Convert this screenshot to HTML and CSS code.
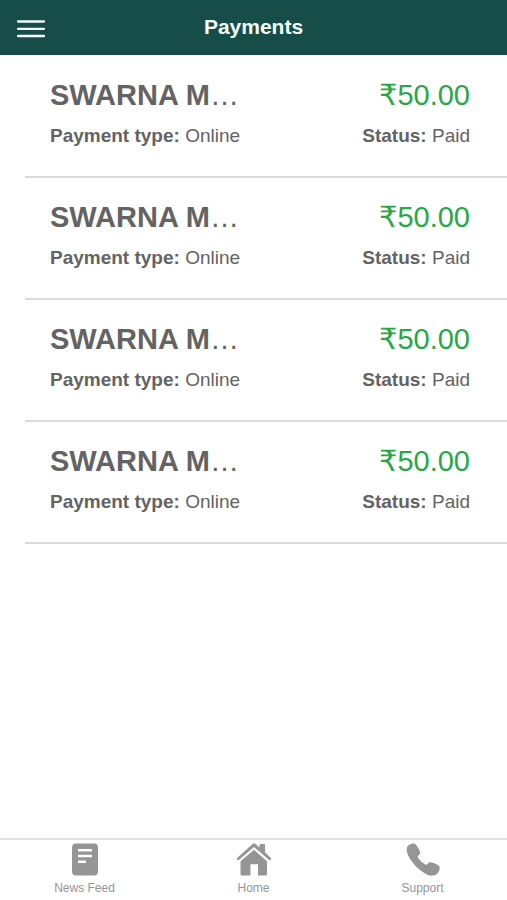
FILE: index.html
```html
<!DOCTYPE html>
<html lang="en">
<head>
<meta charset="utf-8">
<meta name="viewport" content="width=device-width, initial-scale=1">
<title>Payments</title>
<link rel="stylesheet" href="styles.css">
</head>
<body>
<header class="topbar">
  <button class="menu" type="button" aria-label="Menu">
    <svg width="30" height="20" viewBox="0 0 30 20" aria-hidden="true"><path d="M2 2.5H28M2 9.8H28M2 17H28" stroke="currentColor" stroke-width="2.3" stroke-linecap="round"/></svg>
  </button>
  <h1 class="title">Payments</h1>
</header>
<main class="content">
  <ul class="payments">
    <li class="payment">
      <div class="line main-line"><span class="name"><strong>SWARNA M</strong>…</span><span class="amount"><span class="currency">₹</span>50.00</span></div>
      <div class="line detail-line"><span><strong>Payment type:</strong> Online</span><span><strong>Status:</strong> Paid</span></div>
    </li>
    <li class="payment">
      <div class="line main-line"><span class="name"><strong>SWARNA M</strong>…</span><span class="amount"><span class="currency">₹</span>50.00</span></div>
      <div class="line detail-line"><span><strong>Payment type:</strong> Online</span><span><strong>Status:</strong> Paid</span></div>
    </li>
    <li class="payment">
      <div class="line main-line"><span class="name"><strong>SWARNA M</strong>…</span><span class="amount"><span class="currency">₹</span>50.00</span></div>
      <div class="line detail-line"><span><strong>Payment type:</strong> Online</span><span><strong>Status:</strong> Paid</span></div>
    </li>
    <li class="payment">
      <div class="line main-line"><span class="name"><strong>SWARNA M</strong>…</span><span class="amount"><span class="currency">₹</span>50.00</span></div>
      <div class="line detail-line"><span><strong>Payment type:</strong> Online</span><span><strong>Status:</strong> Paid</span></div>
    </li>
  </ul>
</main>
<nav class="tabs">
  <a class="tab" href="#news">
    <svg width="36" height="36" viewBox="0 0 36 36" aria-hidden="true"><path fill="currentColor" fill-rule="evenodd" d="M9 1.5H27Q31 1.5 31 5.5V29.5Q31 33.5 27 33.5H9Q5 33.5 5 29.5V5.5Q5 1.5 9 1.5ZM11 7V9.5H25V7ZM11 12.7V15.2H25V12.7ZM11 18.4V20.9H19V18.4Z"/></svg>
    <span>News Feed</span>
  </a>
  <a class="tab" href="#home">
    <svg width="36" height="36" viewBox="0 0 36 36" aria-hidden="true"><g fill="currentColor"><path d="M18 7.7L31 19.2V32Q31 33.5 29.5 33.5H22V22.3H14.5V33.5H6Q4.5 33.5 4.5 32V19.2Z"/><path d="M16.5 1.9Q18 .8 19.5 1.9L23.5 5.5V3Q23.5 2 24.5 2H28Q29 2 29 3V10.3L34.6 15.7Q35.5 16.7 34.7 17.7Q33.8 18.5 32.8 17.7L18 4.9L3.2 17.7Q2.2 18.5 1.3 17.7Q.5 16.7 1.4 15.7Z"/></g></svg>
    <span>Home</span>
  </a>
  <a class="tab" href="#support">
    <svg width="36" height="36" viewBox="0 0 36 36" aria-hidden="true"><path fill="currentColor" d="M2.8 4C4.5 2.2 7 1.2 8.8 1.5C10.8 1.9 13.2 5.3 14.8 9.1C15.6 11.2 14.9 12.3 13.4 13.4C12.5 14.2 12.6 15.2 13.5 16.5C15.3 18.9 17.5 20.8 19.8 22.2C21 23 22 22.8 22.8 21.7C23.9 20.3 25 20 26.8 20.5C30.2 21.3 33.4 22.9 34.4 24.5C35.4 26.5 34 30 32 31.7C29.5 34 26 34.2 22.5 32.8C15 29.5 6 20.5 2.8 12.5C1.4 9 1.2 5.7 2.8 4Z"/></svg>
    <span>Support</span>
  </a>
</nav>
</body>
</html>
```
FILE: styles.css
```css
* {
  box-sizing: border-box;
}

body {
  margin: 0;
  min-height: 100vh;
  display: flex;
  flex-direction: column;
  background: #fff;
  color: #636363;
  font-family: "Liberation Sans", Arial, sans-serif;
}

.topbar {
  display: grid;
  grid-template-columns: 1fr auto 1fr;
  align-items: center;
  height: 55px;
  padding: 0 16px;
  background: #174d49;
  color: #f4fffd;
}

.menu {
  justify-self: start;
  display: flex;
  padding: 2px 0 0;
  border: 0;
  background: none;
  color: inherit;
}

.title {
  margin: 0;
  padding-bottom: 2px;
  font-size: 21px;
  line-height: 24px;
}

.content {
  flex: 1;
  padding-top: 1px;
}

.payments {
  margin: 0;
  padding: 0 0 0 25px;
  list-style: none;
}

.payment {
  padding: 21px 37px 28px 25px;
  border-bottom: 2px solid #dadada;
}

.line {
  display: flex;
  justify-content: space-between;
}

.main-line {
  margin-bottom: 11px;
  font-size: 29px;
  line-height: 36px;
}

.detail-line {
  font-size: 19px;
  line-height: 24px;
}

.amount {
  color: #28a745;
}

.currency {
  font-family: "DejaVu Sans", sans-serif;
  line-height: 1;
}

.tabs {
  display: grid;
  grid-template-columns: repeat(3, 1fr);
  padding: 2px 0 4px;
  border-top: 2px solid #dfdfdf;
  background: #fff;
}

.tab {
  display: flex;
  flex-direction: column;
  align-items: center;
  gap: 2px;
  color: #959595;
  font-size: 12px;
  line-height: 16px;
  text-decoration: none;
}
```
